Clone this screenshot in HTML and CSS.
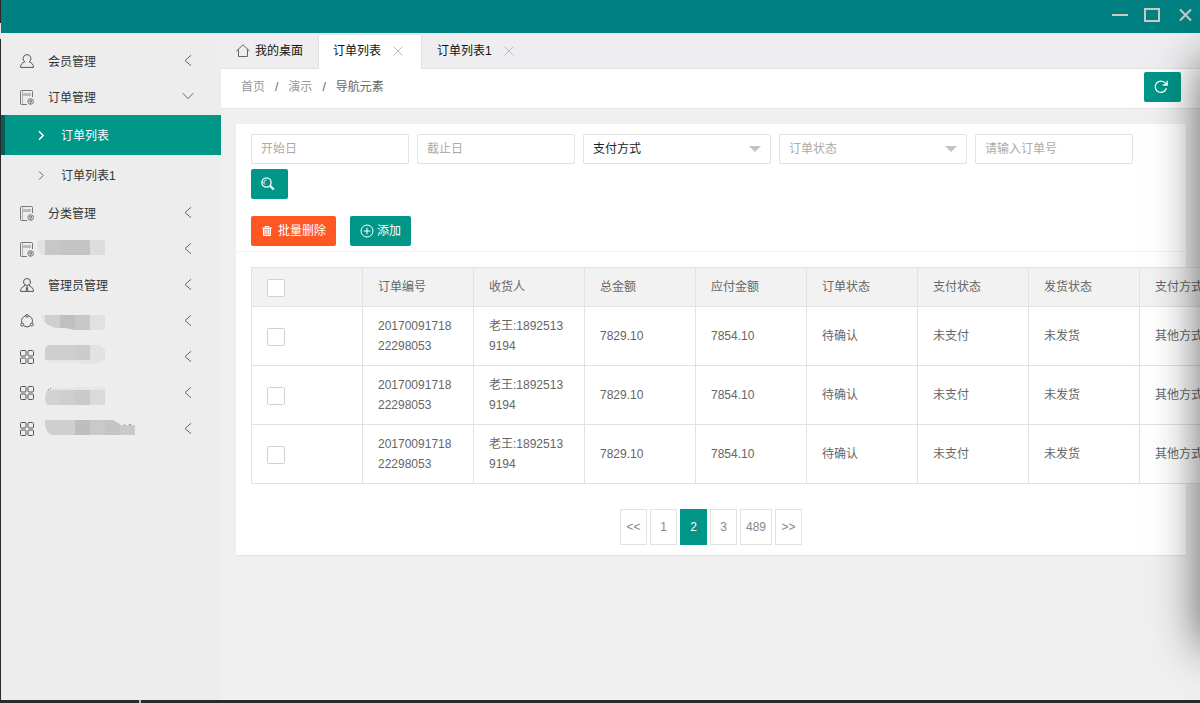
FILE: index.html
```html
<!DOCTYPE html>
<html lang="zh-CN">
<head>
<meta charset="utf-8">
<title>订单列表</title>
<link rel="stylesheet" href="styles.css">
</head>
<body>
<svg class="defs" aria-hidden="true">
  <symbol id="i-left" viewBox="0 0 12 12"><path d="M9 .3 3 5.500l6 5.200"/></symbol>
  <symbol id="i-down" viewBox="0 0 12 12"><path d="M.8 2.200 6 7.600l5.200-5.400"/></symbol>
  <symbol id="i-right" viewBox="0 0 12 12"><path d="m4 2.300 4.200 4.200L4 10.700"/></symbol>
  <symbol id="i-user" viewBox="0 0 14 14"><path d="M7 .6a4 4 0 0 1 2.200 7.300c2.700.7 4.200 2.600 4.300 5.500H.5C.6 10.500 2.100 8.600 4.800 7.900A4 4 0 0 1 7 .6z"/></symbol>
  <symbol id="i-admin" viewBox="0 0 14 14"><circle cx="7" cy="4" r="3.500"/><path d="M4.800 7 4 8.400C1.800 9 .6 10.800.5 13.400h13c-.1-2.600-1.300-4.400-3.500-5L9.200 7M6.200 9.300 7 8.600l.8.700L7.400 10l.5 2.600-.9.800-.9-.8L6.600 10z"/></symbol>
  <symbol id="i-order" viewBox="0 0 14 15"><path d="M12.500 7V1.500a1 1 0 0 0-1-1H1.500a1 1 0 0 0-1 1v12a1 1 0 0 0 1 1H7"/><path stroke="#b5b5b5" d="M2.500 1v13"/><path stroke="#bcbcbc" stroke-width="3" d="M3 4.500h8"/><circle cx="10.700" cy="11.500" r="2.800"/><path d="M9.200 11 10.700 10l1.500 1-1.500 1zM10.700 12v2"/></symbol>
  <symbol id="i-ring" viewBox="0 0 14 14"><path d="M5.500 1.800A5.500 5.500 0 0 0 1.700 8.600M8.500 1.800a5.500 5.500 0 0 1 3.800 6.800M3.700 11.800a5.500 5.500 0 0 0 6.600 0"/><circle cx="7" cy="1.800" r="1.300"/><circle cx="2.200" cy="10.500" r="1.500"/><circle cx="11.800" cy="10.500" r="1.500"/></symbol>
  <symbol id="i-grid" viewBox="0 0 14 14"><rect x=".5" y=".5" width="5.500" height="5.500" rx="1"/><rect x="8" y=".5" width="5.500" height="5.500" rx="1"/><rect x=".5" y="8" width="5.500" height="5.500" rx="1"/><rect x="8" y="8" width="5.500" height="5.500" rx="1"/></symbol>
  <symbol id="i-home" viewBox="0 0 14 14"><path d="M.4 7 7 .8 13.600 7M2.500 5.200v7.300h9V5.200"/></symbol>
  <symbol id="i-close" viewBox="0 0 10 10"><path d="m.6.6 8.800 8.800M9.400.6.6 9.400"/></symbol>
  <symbol id="i-refresh" viewBox="0 0 14 14"><path stroke-width="1.300" d="M12.400 8.300A5.700 5.700 0 1 1 11.400 3.200L13 4.800M13.200.8v4.200H8.800"/></symbol>
  <symbol id="i-search" viewBox="0 0 14 14"><circle cx="5.500" cy="5.500" r="4.600" stroke-width="1.300"/><path d="M5.400 2.800a2.600 2.600 0 0 0-1.300 4.800"/><path d="m9.200 9 3.600 3.500" stroke-width="2.300"/></symbol>
  <symbol id="i-trash" viewBox="0 0 12 12"><path d="M1 3h10M4 2.500V1.500h4v1"/><path fill="#ffab91" d="M2.500 3.500v7h7v-7z"/><path d="M4.700 5.200v3.600M7.300 5.200v3.600"/></symbol>
  <symbol id="i-plus" viewBox="0 0 14 14"><circle cx="7" cy="7" r="6"/><path d="M7 3.700v6.600M3.700 7h6.600"/></symbol>
</svg>

<div class="window">
  <header class="titlebar">
    <button class="win-btn" type="button" aria-label="最小化"><svg width="16" height="16" viewBox="0 0 16 16"><path d="M0 8h16"/></svg></button>
    <button class="win-btn" type="button" aria-label="最大化"><svg width="16" height="16" viewBox="0 0 16 16"><path d="M1 2h14v12H1z"/></svg></button>
    <button class="win-btn" type="button" aria-label="关闭"><svg width="16" height="16" viewBox="0 0 16 16"><path d="m4 2.500 11 11M15 2.500 4 13.500"/></svg></button>
  </header>

  <div class="body">
    <nav class="sidebar">
      <a class="item" href="#"><svg class="icon"><use href="#i-user"/></svg><span class="label">会员管理</span><svg class="arrow"><use href="#i-left"/></svg></a>
      <a class="item" href="#"><svg class="icon pale"><use href="#i-order"/></svg><span class="label">订单管理</span><svg class="arrow"><use href="#i-down"/></svg></a>
      <a class="sub active" href="#"><svg class="arrow"><use href="#i-right"/></svg><span class="label">订单列表</span></a>
      <a class="sub" href="#"><svg class="arrow"><use href="#i-right"/></svg><span class="label">订单列表1</span></a>
      <a class="item" href="#"><svg class="icon pale"><use href="#i-order"/></svg><span class="label">分类管理</span><svg class="arrow"><use href="#i-left"/></svg></a>
      <a class="item" href="#" aria-label="菜单"><svg class="icon pale"><use href="#i-order"/></svg>
        <svg class="mask" viewBox="34 0 104 36"><path fill="#e0e3e2" d="M39 9h6v15h-2q-6-3-6-10 0-4 2-5z"/><path fill="#c8c7c7" d="M45 9h15v15H45z"/><path fill="#c5c4c4" d="M60 9h30v15H60z"/><path fill="#dcdedd" d="M90 9h15v14l-2 1H90z"/></svg>
        <svg class="arrow"><use href="#i-left"/></svg></a>
      <a class="item" href="#"><svg class="icon"><use href="#i-admin"/></svg><span class="label">管理员管理</span><svg class="arrow"><use href="#i-left"/></svg></a>
      <a class="item" href="#" aria-label="菜单"><svg class="icon"><use href="#i-ring"/></svg>
        <svg class="mask" viewBox="34 0 104 36"><path fill="#e3e4e4" d="M42 12h3v8q-3-3-3-8z"/><path fill="#cfcfcf" d="M45 12h15v13q-10 0-15-6z"/><path fill="#c2bfc0" d="M60 12h15v15l-10-2h-5z"/><path fill="#c8c8ca" d="M75 12h15v15H75z"/><path fill="#e1e1e0" d="M90 12h15v15H90z"/></svg>
        <svg class="arrow"><use href="#i-left"/></svg></a>
      <a class="item" href="#" aria-label="菜单"><svg class="icon"><use href="#i-grid"/></svg>
        <svg class="mask" viewBox="34 0 104 36"><path fill="#e4e6e6" d="M45 10h60v8q-4 7-10 7-10-1-40-1-9 0-11-6z"/><path fill="#cfcfcf" d="M48 6h27v15H45V9z"/><path fill="#cbcccc" d="M75 6h15v15H75z"/><path fill="#e0e2e4" d="M90 6h10l5 5v10H90z"/></svg>
        <svg class="arrow"><use href="#i-left"/></svg></a>
      <a class="item" href="#" aria-label="菜单"><svg class="icon"><use href="#i-grid"/></svg>
        <svg class="mask" viewBox="34 0 104 36"><path fill="#e5e6e6" d="M52 13h23v-1h30v3H50z"/><path fill="#d2d2d2" d="M47 15h13v15H48q-3-2-3-8z"/><path fill="#cecece" d="M60 15h15v15H60z"/><path fill="#cacaca" d="M75 15h15v15H75z"/><path fill="#dadadb" d="M90 15h15v15H90z"/><path fill="#888" d="M48 14h1v1h-1zM50 13h1v1h-1z"/></svg>
        <svg class="arrow"><use href="#i-left"/></svg></a>
      <a class="item" href="#" aria-label="菜单"><svg class="icon"><use href="#i-grid"/></svg>
        <svg class="mask" viewBox="34 0 104 36"><path fill="#cfcfcf" d="M45 9h30v15H52q-8-3-7-15z"/><path fill="#bfbebe" d="M75 9h15v15H75z"/><path fill="#cac9c9" d="M90 9h15v15H90z"/><path fill="#c5c4c2" d="M105 9h8l7 4v11h-15z"/><path fill="#c6cacd" d="M120 14h15v10h-15z"/><path fill="#89a" d="M124 13h1v1h-1zM129 13h2v1h-2z"/></svg>
        <svg class="arrow"><use href="#i-left"/></svg></a>
    </nav>

    <main class="main">
      <div class="tabs">
        <a class="tab" href="#"><svg class="home"><use href="#i-home"/></svg>我的桌面</a>
        <div class="tab current"><a href="#">订单列表</a><button type="button" aria-label="关闭标签"><svg><use href="#i-close"/></svg></button></div>
        <div class="tab"><a href="#">订单列表1</a><button type="button" aria-label="关闭标签"><svg><use href="#i-close"/></svg></button></div>
      </div>
      <div class="crumbs">
        <a href="#">首页</a><span>/</span><a href="#">演示</a><span>/</span><a class="here" href="#">导航元素</a>
        <button class="btn icon-btn refresh" type="button" aria-label="刷新"><svg><use href="#i-refresh"/></svg></button>
      </div>

      <section class="card">
        <form class="filters">
          <input class="field" type="text" placeholder="开始日" aria-label="开始日">
          <input class="field" type="text" placeholder="截止日" aria-label="截止日">
          <span class="select"><select class="field" aria-label="支付方式"><option>支付方式</option></select></span>
          <span class="select muted"><select class="field" aria-label="订单状态"><option>订单状态</option></select></span>
          <input class="field" type="text" placeholder="请输入订单号" aria-label="订单号">
          <button class="btn icon-btn" type="button" aria-label="搜索"><svg><use href="#i-search"/></svg></button>
        </form>
        <div class="toolbar">
          <button class="btn danger" type="button"><svg><use href="#i-trash"/></svg>批量删除</button>
          <button class="btn add" type="button"><svg><use href="#i-plus"/></svg>添加</button>
        </div>
        <div class="content">
          <table class="orders">
            <thead>
              <tr><th><input type="checkbox" aria-label="全选"></th><th>订单编号</th><th>收货人</th><th>总金额</th><th>应付金额</th><th>订单状态</th><th>支付状态</th><th>发货状态</th><th>支付方式</th></tr>
            </thead>
            <tbody>
              <tr><td><input type="checkbox" aria-label="选择订单"></td><td>20170091718<br>22298053</td><td>老王:1892513<br>9194</td><td>7829.10</td><td>7854.10</td><td>待确认</td><td>未支付</td><td>未发货</td><td>其他方式</td></tr>
              <tr><td><input type="checkbox" aria-label="选择订单"></td><td>20170091718<br>22298053</td><td>老王:1892513<br>9194</td><td>7829.10</td><td>7854.10</td><td>待确认</td><td>未支付</td><td>未发货</td><td>其他方式</td></tr>
              <tr><td><input type="checkbox" aria-label="选择订单"></td><td>20170091718<br>22298053</td><td>老王:1892513<br>9194</td><td>7829.10</td><td>7854.10</td><td>待确认</td><td>未支付</td><td>未发货</td><td>其他方式</td></tr>
            </tbody>
          </table>
          <div class="pager">
            <a href="#">&lt;&lt;</a><a href="#">1</a><a class="on" href="#">2</a><a href="#">3</a><a href="#">489</a><a href="#">&gt;&gt;</a>
          </div>
        </div>
      </section>
    </main>
  </div>
  <div class="edge-shade"></div>
</div>
</body>
</html>
```
FILE: styles.css
```css
* { box-sizing: border-box; }

body {
  margin: 0;
  font: 12px/20px "Liberation Sans", "Noto Sans CJK SC", sans-serif;
  color: #333;
  background: #2a2a2c;
}

a { color: inherit; text-decoration: none; }
button, input, select { font: inherit; margin: 0; }
svg { display: block; flex: none; fill: none; stroke: currentColor; }
.defs { position: absolute; width: 0; height: 0; }

.window {
  position: relative;
  display: flex;
  flex-direction: column;
  height: 100vh;
  overflow: hidden;
  padding: 0 0 3px 1px;
  background:
    linear-gradient(#bbb, #bbb) 139px 100% / 2px 3px no-repeat,
    linear-gradient(#e4e4e4, #e4e4e4) 0 23px / 1px 16px no-repeat,
    #2a2a2c;
}

.titlebar {
  display: flex;
  justify-content: flex-end;
  gap: 16px;
  height: 33px;
  flex: none;
  padding: 7px 8px 0 0;
  background: #008080;
}
.win-btn {
  width: 16px;
  height: 16px;
  padding: 0;
  border: 0;
  background: none;
  color: #c9c9c9;
}
.win-btn svg { stroke-width: 2; }

.body { display: flex; flex: 1; min-height: 0; }

.sidebar {
  width: 220px;
  flex: none;
  padding-top: 10px;
  background: #ededed;
}
.item {
  display: flex;
  align-items: center;
  height: 36px;
  padding: 0 27px 0 19px;
}
.item .icon { width: 14px; height: 14px; color: #555; }
.item .icon.pale { height: 15px; color: #777; }
.item .label { margin-left: 14px; }
.label { padding-top: 2px; }
.item .arrow { margin-left: auto; }
.arrow { width: 12px; height: 12px; color: #666; }
.mask { width: 104px; height: 36px; stroke: none; }

.sub {
  display: flex;
  align-items: center;
  gap: 14px;
  height: 40px;
  padding-left: 30px;
  border-left: 4px solid transparent;
}
.sub.active {
  color: #fff;
  background: #009688;
  border-left-color: #0a5c56;
}
.sub.active .arrow { color: #fff; stroke-width: 1.5; }

.main {
  flex: 1;
  min-width: 0;
  overflow: hidden;
  background: #f0f0f0;
}

.tabs {
  display: flex;
  height: 36px;
  padding-top: 1px;
  background: #eeeef0;
  border-bottom: 1px solid #e2e2e2;
  color: #111;
}
.tab {
  display: flex;
  align-items: center;
  height: 33px;
  padding: 0 15px;
}
.tab .home { width: 14px; height: 14px; margin-right: 5px; color: #666; }
.tab.current {
  height: 35px;
  padding: 0 18px 3px 14px;
  background: #fff;
  border: 1px solid #e2e2e2;
  border-bottom: 0;
  border-radius: 2px 2px 0 0;
}
.tab button {
  width: 10px;
  height: 10px;
  margin-left: 12px;
  padding: 0;
  border: 0;
  background: none;
  color: #bbb;
}
.tab button svg { width: 10px; height: 10px; }

.crumbs {
  display: flex;
  align-items: center;
  gap: 10px;
  height: 40px;
  padding: 0 19px 3px 20px;
  background: #fff;
  border-bottom: 1px solid #e4e4e4;
  color: #999;
}
.crumbs .here, .crumbs span { color: #666; }
.refresh { margin-left: auto; }

.btn {
  display: inline-flex;
  align-items: center;
  gap: 5px;
  height: 30px;
  padding: 0 10px;
  border: 0;
  border-radius: 2px;
  background: #009688;
  color: #fff;
}
.btn svg { width: 14px; height: 14px; }
.icon-btn { width: 37px; }
.danger { background: #ff5722; }
.danger svg { width: 12px; height: 12px; }
.btn.add { gap: 3px; }

.card {
  margin: 15px 14px 15px 15px;
  background: #fff;
  border-radius: 2px;
  box-shadow: 0 1px 2px rgba(0, 0, 0, .06);
}

.filters {
  display: flex;
  flex-wrap: wrap;
  gap: 5px 8px;
  padding: 10px 15px 0;
}
.field {
  width: 158px;
  height: 30px;
  padding: 0 9px;
  border: 1px solid #e2e2e2;
  border-radius: 2px;
  background: #fff;
  color: #222;
}
.field::placeholder { color: #aaa; opacity: 1; }
.select { position: relative; }
.select .field { display: block; width: 188px; appearance: none; }
.select::after {
  content: "";
  position: absolute;
  top: 12px;
  right: 10px;
  border: 6px solid transparent;
  border-top-color: #c2c2c2;
  border-bottom: 0;
  pointer-events: none;
}
.select.muted .field { color: #aaa; }

.toolbar {
  display: flex;
  gap: 14px;
  padding: 17px 15px 5px;
  border-bottom: 1px solid #f4f4f4;
}

.content { padding: 15px 15px 10px; }

.orders {
  width: 1000px;
  table-layout: fixed;
  border-collapse: collapse;
  background: #fff;
  color: #666;
}
.orders th, .orders td {
  padding: 9px 15px;
  border: 1px solid #e2e2e2;
  font-weight: 400;
  text-align: left;
}
.orders th { background: #f2f2f2; }
.orders input {
  display: block;
  appearance: none;
  width: 18px;
  height: 18px;
  margin-top: 2px;
  border: 1px solid #d2d2d2;
  border-radius: 2px;
  background: #fff;
}

.pager {
  display: flex;
  justify-content: center;
  gap: 3px;
  margin-top: 25px;
}
.pager a {
  min-width: 27px;
  height: 36px;
  padding: 0 5px;
  border: 1px solid #e2e2e2;
  line-height: 34px;
  text-align: center;
  color: #888;
}
.pager .on { background: #009688; border-color: #009688; color: #fff; }

.edge-shade {
  position: absolute;
  left: 100%;
  top: 60px;
  bottom: 56px;
  width: 200px;
  box-shadow: 0 0 44px rgba(0, 0, 0, .6);
  pointer-events: none;
}
```
